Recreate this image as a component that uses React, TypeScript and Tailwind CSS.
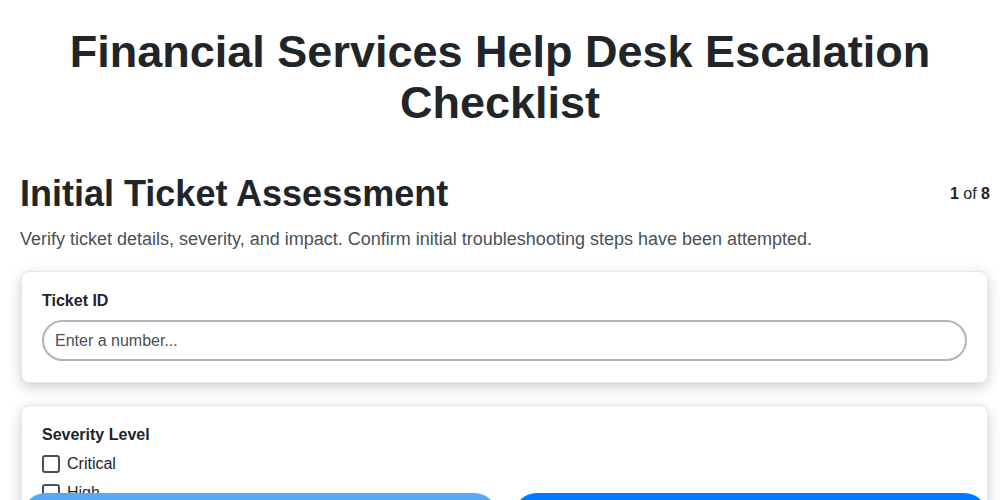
import type { FC } from "react";

const severityOptions = ["Critical", "High", "Medium", "Low"];

const App: FC = () => {
  return (
    <div className="min-h-screen bg-white text-[#212529] font-['Liberation_Sans',Arial,sans-serif]">
      <div className="pl-[20px] pr-[10px] pt-[26px] pb-[120px]">
        <h1 className="text-center text-[45px] leading-[51px] font-bold pl-[40px] pr-[50px]">
          Financial Services Help Desk Escalation Checklist
        </h1>

        {/* step header */}
        <div className="mt-[44px] flex items-center justify-between">
          <h2 className="text-[36px] leading-[43px] font-bold">Initial Ticket Assessment</h2>
          <div className="text-[16px]">
            <span className="font-bold">1</span> of <span className="font-bold">8</span>
          </div>
        </div>
        <p className="mt-[13px] text-[18px] leading-[22px] text-[#495057]">
          Verify ticket details, severity, and impact. Confirm initial troubleshooting steps have been attempted.
        </p>

        {/* fields */}
        <div className="mt-[21px] ml-[1px] mr-[2px] flex flex-col gap-[22px]">
          <div className="rounded-[8px] border border-[#e5e7eb] bg-white px-[20px] pt-[19px] pb-[21px] shadow-[0_4px_14px_rgba(0,0,0,0.2)]">
            <label className="block text-[16px] leading-[19px] font-bold mb-[10px]">Ticket ID</label>
            <input
              type="text"
              placeholder="Enter a number..."
              className="w-full h-[41px] rounded-full border-2 border-[#adb5bd] px-[11px] text-[16px] placeholder:text-[#495057] outline-none"
            />
          </div>

          <div className="rounded-[8px] border border-[#e5e7eb] bg-white px-[20px] pt-[19px] pb-[21px] shadow-[0_4px_14px_rgba(0,0,0,0.2)]">
            <div className="text-[16px] leading-[19px] font-bold mb-[10px]">Severity Level</div>
            <div className="flex flex-col gap-[9px]">
              {severityOptions.map((opt) => (
                <label key={opt} className="flex items-center gap-[7px] text-[16px] leading-[20px]">
                  <span className="w-[18px] h-[18px] rounded-[3px] border-2 border-[#495057] bg-white" />
                  {opt}
                </label>
              ))}
            </div>
          </div>
        </div>
      </div>

      {/* navigation */}
      <div className="fixed inset-x-0 -bottom-[41px] flex gap-[15px] pl-[22px] pr-[12px]">
        <button className="flex-1 h-[48px] rounded-full bg-[#58a8f8] text-white text-[16px] font-bold">
          Previous
        </button>
        <button className="flex-1 h-[48px] rounded-full bg-[#007bff] text-white text-[16px] font-bold">
          Next
        </button>
      </div>
    </div>
  );
};

export default App;
